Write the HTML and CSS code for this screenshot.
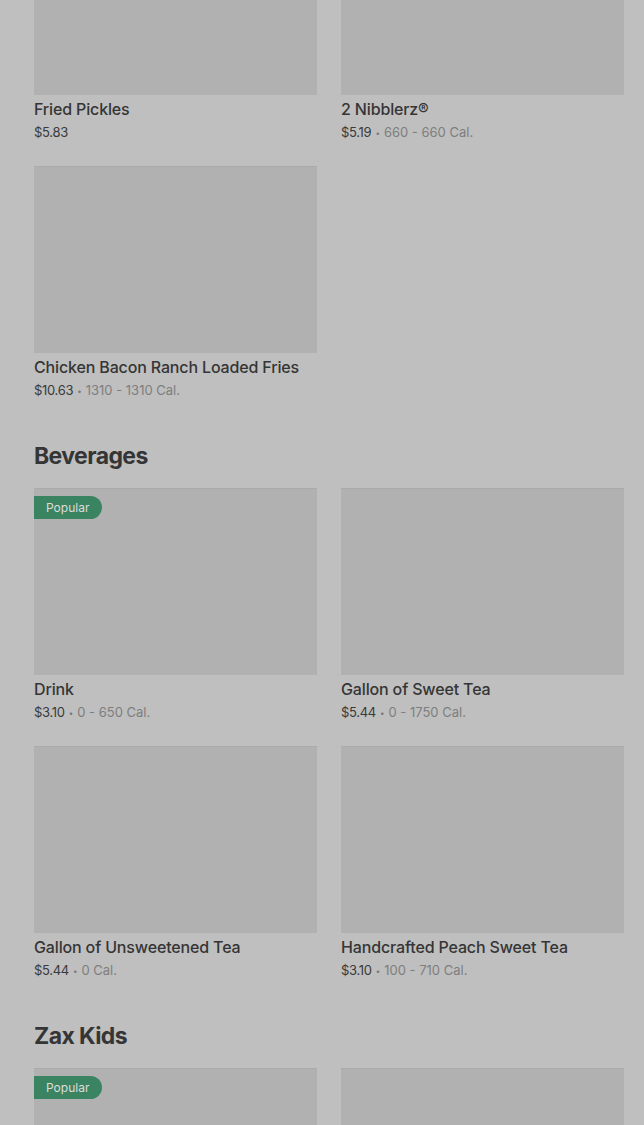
FILE: index.html
```html
<!DOCTYPE html>
<html lang="en">
<head>
<meta charset="utf-8">
<title>Menu</title>
<link rel="stylesheet" href="styles.css">
</head>
<body>
<main class="menu">
  <section class="section section-first">
    <div class="grid">
      <div class="card">
        <div class="thumb"></div>
        <div class="name">Fried Pickles</div>
        <div class="meta"><span class="price">$5.83</span></div>
      </div>
      <div class="card">
        <div class="thumb"></div>
        <div class="name">2 Nibblerz®</div>
        <div class="meta"><span class="price">$5.19</span><span class="dot">•</span><span class="cal">660 - 660 Cal.</span></div>
      </div>
      <div class="card">
        <div class="thumb"></div>
        <div class="name">Chicken Bacon Ranch Loaded Fries</div>
        <div class="meta"><span class="price">$10.63</span><span class="dot">•</span><span class="cal">1310 - 1310 Cal.</span></div>
      </div>
    </div>
  </section>

  <section class="section">
    <h2 class="section-title">Beverages</h2>
    <div class="grid">
      <div class="card">
        <div class="thumb"><span class="badge">Popular</span></div>
        <div class="name">Drink</div>
        <div class="meta"><span class="price">$3.10</span><span class="dot">•</span><span class="cal">0 - 650 Cal.</span></div>
      </div>
      <div class="card">
        <div class="thumb"></div>
        <div class="name">Gallon of Sweet Tea</div>
        <div class="meta"><span class="price">$5.44</span><span class="dot">•</span><span class="cal">0 - 1750 Cal.</span></div>
      </div>
      <div class="card">
        <div class="thumb"></div>
        <div class="name">Gallon of Unsweetened Tea</div>
        <div class="meta"><span class="price">$5.44</span><span class="dot">•</span><span class="cal">0 Cal.</span></div>
      </div>
      <div class="card">
        <div class="thumb"></div>
        <div class="name">Handcrafted Peach Sweet Tea</div>
        <div class="meta"><span class="price">$3.10</span><span class="dot">•</span><span class="cal">100 - 710 Cal.</span></div>
      </div>
    </div>
  </section>

  <section class="section">
    <h2 class="section-title">Zax Kids</h2>
    <div class="grid">
      <div class="card">
        <div class="thumb"><span class="badge">Popular</span></div>
      </div>
      <div class="card">
        <div class="thumb"></div>
      </div>
    </div>
  </section>
</main>
</body>
</html>
```

FILE: styles.css
```css
html, body {
  margin: 0;
  padding: 0;
  background: #bfbfbf;
}

body {
  font-family: Inter, "Noto Sans", "Liberation Sans", sans-serif;
  color: #2f2f2f;
  overflow: hidden;
}

.menu {
  padding: 0 20px 0 34px;
}

.section-first {
  margin-top: -92px;
}

.section-title {
  margin: 39px 0 16px;
  font-size: 23px;
  line-height: 32px;
  font-weight: 700;
  letter-spacing: -0.6px;
  color: #353535;
}

.grid {
  display: grid;
  grid-template-columns: 283px 283px;
  column-gap: 24px;
  row-gap: 23px;
}

.card {
  display: flex;
  flex-direction: column;
}

.thumb {
  position: relative;
  height: 187px;
  background: #b1b1b1;
  box-shadow: inset 0 1px 0 #ababab;
}

.badge {
  position: absolute;
  top: 8px;
  left: 0;
  height: 23px;
  line-height: 23px;
  padding: 0 13px 0 12px;
  border-radius: 0 12px 12px 0;
  background: #3b8462;
  color: #dcdcdc;
  font-size: 12px;
  font-weight: 400;
}

.name {
  margin-top: 2px;
  font-size: 16px;
  line-height: 24px;
  font-weight: 500;
  letter-spacing: -0.15px;
  color: #353535;
  white-space: nowrap;
}

.meta {
  margin-top: 1px;
  font-size: 13px;
  line-height: 20px;
  color: #7a7a7a;
  white-space: nowrap;
}

.price {
  color: #3a3a3a;
  letter-spacing: -0.3px;
}

.dot {
  margin: 0 4px;
  font-size: 8px;
  color: #7a7a7a;
  vertical-align: 1px;
}

.cal {
  color: #7e7e7e;
}
```
